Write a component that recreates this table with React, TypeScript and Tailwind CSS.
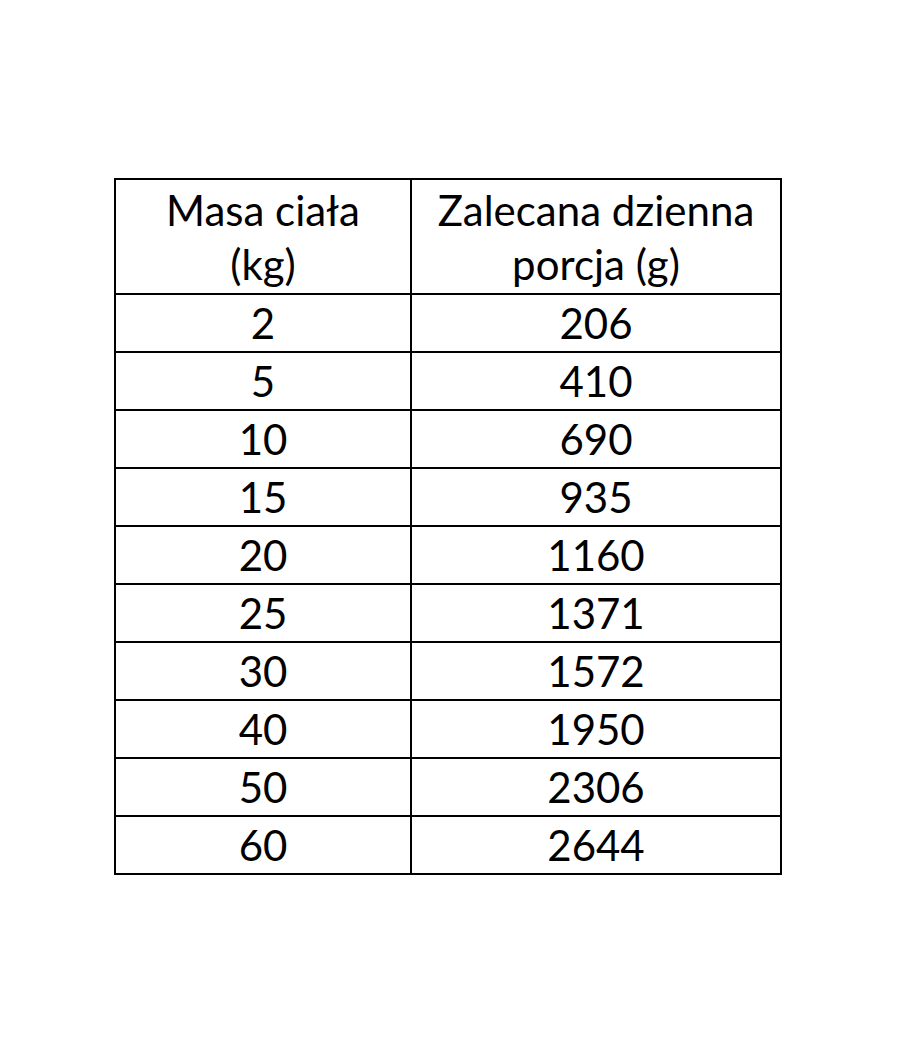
import React from "react";

const rows: [string, string][] = [
  ["2", "206"],
  ["5", "410"],
  ["10", "690"],
  ["15", "935"],
  ["20", "1160"],
  ["25", "1371"],
  ["30", "1572"],
  ["40", "1950"],
  ["50", "2306"],
  ["60", "2644"],
];

const App = () => {
  return (
    <main className="w-[900px] h-[1050px] bg-white pt-[178px] pl-[114px] font-['Lato','Liberation_Sans',sans-serif] text-black">
      <table className="border-collapse w-[668px] text-[42px] leading-[54px]">
        <thead>
          <tr className="h-[115px]">
            <th className="w-[296px] border-2 border-black font-normal text-center align-middle">
              Masa ciała
              <br />
              (kg)
            </th>
            <th className="border-2 border-black font-normal text-center align-middle">
              Zalecana dzienna
              <br />
              porcja (g)
            </th>
          </tr>
        </thead>
        <tbody>
          {rows.map(([mass, portion]) => (
            <tr key={mass} className="h-[58px]">
              <td className="border-2 border-black text-center align-middle">{mass}</td>
              <td className="border-2 border-black text-center align-middle">{portion}</td>
            </tr>
          ))}
        </tbody>
      </table>
    </main>
  );
};

export default App;
